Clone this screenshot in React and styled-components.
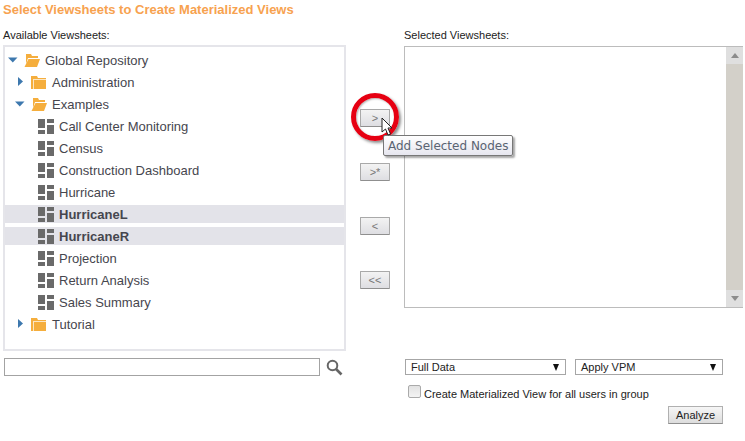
import React from "react";
import styled, { createGlobalStyle } from "styled-components";

const GlobalStyle = createGlobalStyle`
  html, body {
    margin: 0;
    background: #fff;
    font-family: "Liberation Sans", Arial, sans-serif;
  }
`;

const Page = styled.div`
  position: relative;
  width: 745px;
  height: 441px;
  overflow: hidden;
  padding: 2px 3px 0 3px;
  box-sizing: border-box;
`;
const Title = styled.h1`
  margin: 0;
  font-size: 13px;
  line-height: 16px;
  font-weight: bold;
  color: #f7a24f;
`;
const Columns = styled.div`
  display: flex;
  margin-top: 10px;
`;
const LeftCol = styled.div`
  width: 342px;
`;
const RightCol = styled.div`
  width: 338px;
  margin-left: 59px;
`;
const Label = styled.div`
  font-size: 11px;
  line-height: 14px;
  color: #222;
`;
const TreeBox = styled.div`
  box-sizing: border-box;
  width: 343px;
  height: 306px;
  margin-top: 3px;
  border: 2px solid #e5e5ea;
  padding-top: 4px;
`;
const Row = styled.div`
  display: flex;
  align-items: center;
  height: 18px;
  margin-bottom: 4px;
  padding-left: ${(p) => p.$indent}px;
  background: ${(p) => (p.$selected ? "#e3e3e9" : "transparent")};
  font-size: 13px;
  font-weight: ${(p) => (p.$selected ? "bold" : "normal")};
  color: #46464e;
  white-space: nowrap;
`;
const Caret = styled.svg`
  width: 10px;
  height: 10px;
  flex: none;
  margin-right: 6px;
`;
const Folder = styled.svg`
  width: 16px;
  height: 13px;
  flex: none;
  margin-right: 5px;
`;
const Sheet = styled.svg`
  width: 16px;
  height: 16px;
  flex: none;
  margin-right: 5px;
`;
const Middle = styled.div`
  position: absolute;
  left: 360px;
  top: 109px;
  display: flex;
  flex-direction: column;
  gap: 36px;
`;
const MoveButton = styled.button`
  width: 30px;
  height: 18px;
  padding: 0;
  box-sizing: border-box;
  border: 1px solid #a9a9a9;
  border-bottom-color: #8f8f8f;
  border-radius: 1px;
  background: linear-gradient(#f3f3f3, #dedee2);
  font: 11px/14px "Liberation Sans", sans-serif;
  color: #777;
`;
const SelectedBox = styled.div`
  display: flex;
  justify-content: flex-end;
  box-sizing: border-box;
  width: 339px;
  height: 262px;
  margin-top: 4px;
  border: 1px solid #bcbcbc;
  border-right: none;
`;
const Scrollbar = styled.div`
  display: flex;
  flex-direction: column;
  justify-content: space-between;
  width: 17px;
  background: #d3d0c9;
`;
const ScrollArrow = styled.div`
  display: flex;
  align-items: center;
  justify-content: center;
  height: 17px;
  background: #dfdfdf;
  color: #8c8c8c;
`;
const Bottom = styled.div`
  display: flex;
  margin-top: 7px;
`;
const SearchCol = styled.div`
  display: flex;
  align-items: center;
  width: 401px;
  height: 18px;
`;
const SearchInput = styled.input`
  box-sizing: border-box;
  width: 316px;
  height: 18px;
  margin: 0 0 0 1px;
  border: 1px solid #a3a3a3;
  background: #fff;
`;
const SearchIcon = styled.svg`
  width: 17px;
  height: 17px;
  margin-left: 6px;
`;
const Options = styled.div`
  display: flex;
  flex-direction: column;
  width: 318px;
  margin-left: 1px;
`;
const SelectRow = styled.div`
  display: flex;
  gap: 9px;
  margin-top: 1px;
`;
const FakeSelect = styled.div`
  display: flex;
  align-items: center;
  justify-content: space-between;
  box-sizing: border-box;
  width: ${(p) => p.$width}px;
  height: 16px;
  padding: 0 6px 0 5px;
  border: 1px solid #a6a6a6;
  font-size: 11px;
  color: #222;
`;
const SelectArrow = styled.span`
  width: 0;
  height: 0;
  border-left: 3.5px solid transparent;
  border-right: 3.5px solid transparent;
  border-top: 7px solid #111;
`;
const CheckRow = styled.label`
  display: flex;
  align-items: center;
  margin: 12px 0 0 3px;
  font-size: 11px;
  line-height: 14px;
  color: #222;
`;
const CheckBox = styled.span`
  width: 11px;
  height: 11px;
  margin-right: 3px;
  margin-top: -6px;
  border: 1px solid #aaa;
  border-radius: 2px;
  background: linear-gradient(#e2e2e2, #f3f3f3);
`;
const ActionRow = styled.div`
  display: flex;
  justify-content: flex-end;
  margin-top: 5px;
`;
const AnalyzeButton = styled.button`
  box-sizing: border-box;
  width: 55px;
  height: 18px;
  padding: 0;
  border: 1px solid #b0b0b0;
  border-bottom-color: #8f8f8f;
  background: linear-gradient(#f6f6f6, #dddddd);
  font: 11px/14px "Liberation Sans", sans-serif;
  color: #222;
`;
const Highlight = styled.div`
  position: absolute;
  left: 351px;
  top: 93px;
  width: 38px;
  height: 38px;
  border: 5px solid #e60012;
  border-radius: 50%;
  box-shadow: 2px 2px 3px rgba(0, 0, 0, 0.45), inset 1px 1px 2px rgba(0, 0, 0, 0.3);
`;
const Pointer = styled.svg`
  position: absolute;
  left: 381px;
  top: 117px;
  width: 12px;
  height: 19px;
`;
const Tooltip = styled.div`
  position: absolute;
  left: 383px;
  top: 135px;
  box-sizing: border-box;
  width: 130px;
  height: 21px;
  border: 1px solid #777;
  border-radius: 2px;
  background: linear-gradient(#fff, #e6e6ef);
  box-shadow: 2px 2px 2px rgba(0, 0, 0, 0.35);
  padding-left: 4px;
  font: 12px/20px "DejaVu Sans", sans-serif;
  color: #5a6472;
  white-space: nowrap;
`;

const DownCaret = () => (
  <Caret viewBox="0 0 10 10">
    <path d="M0 2.5h9.5L4.8 7.5z" fill="#3d78ae" />
  </Caret>
);
const RightCaret = () => (
  <Caret viewBox="0 0 10 10">
    <path d="M3 0v9L8 4.5z" fill="#3d78ae" />
  </Caret>
);
const OpenFolder = () => (
  <Folder viewBox="0 0 16 13">
    <path d="M2 0h5l1 2h6v2H4L2 10z" fill="#f5ae3d" />
    <path d="M4.5 5H16l-3 8H0.5z" fill="#f5ae3d" />
  </Folder>
);
const ClosedFolder = () => (
  <Folder viewBox="0 0 16 13">
    <path d="M0 0h6l1 2h8v11H0z" fill="#f5ae3d" />
    <path d="M2 3h13v1H3v9H2z" fill="#fbe6c4" />
  </Folder>
);
const SheetIcon = () => (
  <Sheet viewBox="0 0 16 16">
    <path d="M0 1h7v9H0zM0 12h7v4H0zM9 1h7v4H9zM9 7h7v9H9z" fill="#6a6a6a" />
  </Sheet>
);

const sheets = [
  ["Call Center Monitoring"],
  ["Census"],
  ["Construction Dashboard"],
  ["Hurricane"],
  ["HurricaneL", true],
  ["HurricaneR", true],
  ["Projection"],
  ["Return Analysis"],
  ["Sales Summary"],
];

const App = () => {
  return (
    <Page>
      <GlobalStyle />
      <Title>Select Viewsheets to Create Materialized Views</Title>
      <Columns>
        <LeftCol>
          <Label>Available Viewsheets:</Label>
          <TreeBox>
            <Row $indent={3}>
              <DownCaret />
              <OpenFolder />
              Global Repository
            </Row>
            <Row $indent={10}>
              <RightCaret />
              <ClosedFolder />
              Administration
            </Row>
            <Row $indent={10}>
              <DownCaret />
              <OpenFolder />
              Examples
            </Row>
            {sheets.map(([name, selected]) => (
              <Row key={name} $indent={33} $selected={selected}>
                <SheetIcon />
                {name}
              </Row>
            ))}
            <Row $indent={10}>
              <RightCaret />
              <ClosedFolder />
              Tutorial
            </Row>
          </TreeBox>
        </LeftCol>
        <RightCol>
          <Label>Selected Viewsheets:</Label>
          <SelectedBox>
            <Scrollbar>
              <ScrollArrow>
                <svg width="8" height="5" viewBox="0 0 8 5"><path d="M4 0l4 5H0z" fill="currentColor" /></svg>
              </ScrollArrow>
              <ScrollArrow>
                <svg width="8" height="5" viewBox="0 0 8 5"><path d="M0 0h8L4 5z" fill="currentColor" /></svg>
              </ScrollArrow>
            </Scrollbar>
          </SelectedBox>
        </RightCol>
      </Columns>
      <Middle>
        <MoveButton>&gt;</MoveButton>
        <MoveButton>&gt;*</MoveButton>
        <MoveButton>&lt;</MoveButton>
        <MoveButton>&lt;&lt;</MoveButton>
      </Middle>
      <Bottom>
        <SearchCol>
          <SearchInput />
          <SearchIcon viewBox="0 0 17 17">
            <circle cx="6.5" cy="6.5" r="4.8" fill="none" stroke="#666" strokeWidth="2" />
            <path d="M10 10l5.5 5.5" stroke="#666" strokeWidth="2.6" />
          </SearchIcon>
        </SearchCol>
        <Options>
          <SelectRow>
            <FakeSelect $width={161}>
              Full Data
              <SelectArrow />
            </FakeSelect>
            <FakeSelect $width={148}>
              Apply VPM
              <SelectArrow />
            </FakeSelect>
          </SelectRow>
          <CheckRow>
            <CheckBox />
            Create Materialized View for all users in group
          </CheckRow>
          <ActionRow>
            <AnalyzeButton>Analyze</AnalyzeButton>
          </ActionRow>
        </Options>
      </Bottom>
      <Highlight />
      <Tooltip>Add Selected Nodes</Tooltip>
      <Pointer viewBox="0 0 12 19">
        <path d="M1 1v14l3.5-3 2.5 6 2.5-1-2.5-6H11z" fill="#fff" stroke="#222" strokeWidth="1" />
      </Pointer>
    </Page>
  );
};

export default App;
